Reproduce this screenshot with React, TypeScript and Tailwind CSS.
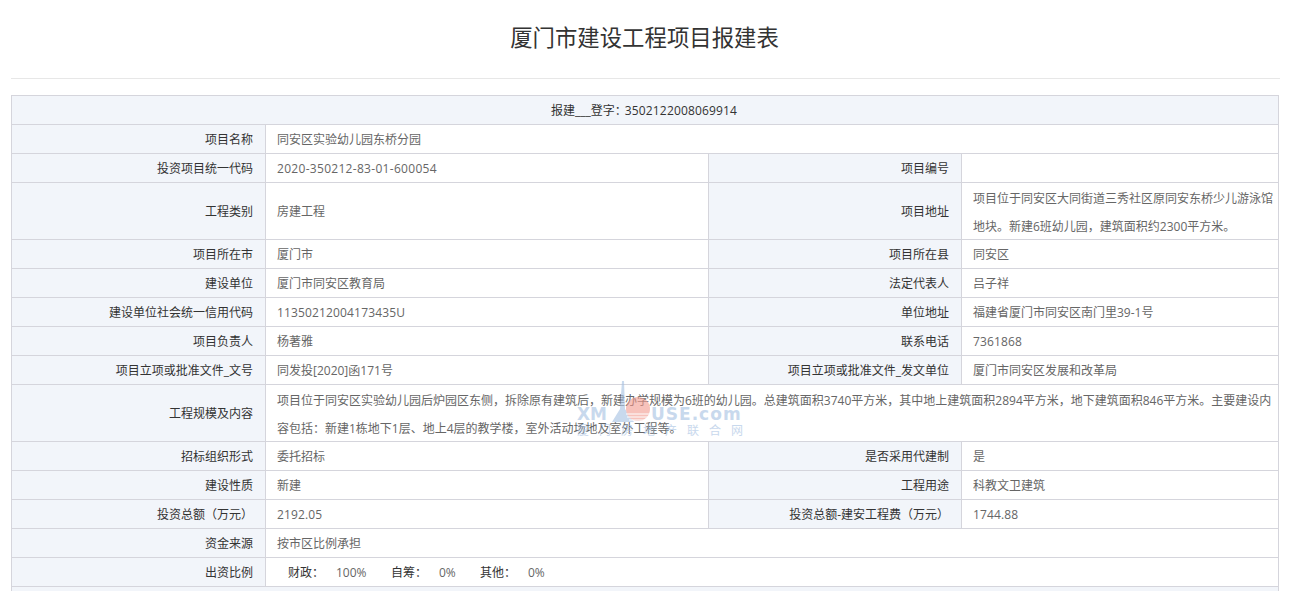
const L = "bg-[#f2f5fa] text-right text-[#333] border border-[#d5d5dc] pl-3 pr-3 pt-[2px] font-normal";
const V = "bg-white text-left text-[#666] border border-[#d5d5dc] pl-[11px] pr-[4px] pt-[2px] font-normal";
const V2 = "bg-white text-left text-[#666] border border-[#d5d5dc] pl-[11px] pr-[4px] leading-[28px] font-normal";
const N = "tracking-[0.15px]";

function Row({ a, b, c, d }: { a: string; b: React.ReactNode; c: string; d: React.ReactNode }) {
  return (
    <tr className="h-[29px]">
      <th className={L}>{a}</th>
      <td className={V}>{b}</td>
      <th className={L}>{c}</th>
      <td className={V}>{d}</td>
    </tr>
  );
}

function Wide({ a, children }: { a: string; children: React.ReactNode }) {
  return (
    <tr className="h-[29px]">
      <th className={L}>{a}</th>
      <td className={V} colSpan={3}>{children}</td>
    </tr>
  );
}

export default function App() {
  return (
    <div className="h-[591px] overflow-hidden bg-white text-xs font-['Open_Sans','Noto_Sans_CJK_SC',sans-serif]">
      <div className="ml-[11px] mr-[12px] pr-[2px] h-[79px] border-b border-[#e7e7e7] flex items-center justify-center pb-[2px]">
        <h1 className="text-[22.4px] text-[#333] font-normal">厦门市建设工程项目报建表</h1>
      </div>
      <div className="relative ml-[11px] mt-4">
        <table className="w-[1267px] table-fixed border-collapse">
          <colgroup>
            <col className="w-[254px]" />
            <col className="w-[443px]" />
            <col className="w-[253px]" />
            <col className="w-[317px]" />
          </colgroup>
          <tbody>
            <tr className="h-[29px]">
              <th colSpan={4} className="bg-[#f2f5fa] text-center text-[#333] border border-[#d5d5dc] pt-[2px] font-normal">报建___登字：<span className={`${N} -ml-[2px] mr-[2px]`}>3502122008069914</span></th>
            </tr>
            <Wide a="项目名称">同安区实验幼儿园东桥分园</Wide>
            <Row a="投资项目统一代码" b={<span className="tracking-[0.3px]">2020-350212-83-01-600054</span>} c="项目编号" d="" />
            <tr className="h-[57px]">
              <th className={L}>工程类别</th>
              <td className={V}>房建工程</td>
              <th className={L}>项目地址</th>
              <td className={V2}><div className="mt-[2px] -mb-[2px]">项目位于同安区大同街道三秀社区原同安东桥少儿游泳馆地块。新建6班幼儿园，建筑面积约2300平方米。</div></td>
            </tr>
            <Row a="项目所在市" b="厦门市" c="项目所在县" d="同安区" />
            <Row a="建设单位" b="厦门市同安区教育局" c="法定代表人" d="吕子祥" />
            <Row a="建设单位社会统一信用代码" b={<span className={N}>11350212004173435U</span>} c="单位地址" d="福建省厦门市同安区南门里39-1号" />
            <Row a="项目负责人" b="杨著雅" c="联系电话" d={<span className={N}>7361868</span>} />
            <Row a="项目立项或批准文件_文号" b="同发投[2020]函171号" c="项目立项或批准文件_发文单位" d="厦门市同安区发展和改革局" />
            <tr className="h-[57px]">
              <th className={L}>工程规模及内容</th>
              <td className={V2} colSpan={3}><div className="mt-[2px] -mb-[2px]">项目位于同安区实验幼儿园后炉园区东侧，拆除原有建筑后，新建办学规模为6班的幼儿园。总建筑面积3740平方米，其中地上建筑面积2894平方米，地下建筑面积846平方米。主要建设内容包括：新建1栋地下1层、地上4层的教学楼，室外活动场地及室外工程等。</div></td>
            </tr>
            <Row a="招标组织形式" b="委托招标" c="是否采用代建制" d="是" />
            <Row a="建设性质" b="新建" c="工程用途" d="科教文卫建筑" />
            <Row a="投资总额（万元）" b={<span className={N}>2192.05</span>} c="投资总额-建安工程费（万元）" d={<span className={N}>1744.88</span>} />
            <Wide a="资金来源">按市区比例承担</Wide>
            <Wide a="出资比例">
              <span className="flex pl-[11px]">
                <span className="text-[#333] w-[48px]">财政：</span>
                <span className="w-[55px]">100%</span>
                <span className="text-[#333] w-[48px]">自筹：</span>
                <span className="w-[41px]">0%</span>
                <span className="text-[#333] w-[48px]">其他：</span>
                <span>0%</span>
              </span>
            </Wide>
            <tr className="h-[29px]">
              <td colSpan={4} className="bg-[#f2f5fa] border border-[#d5d5dc]" />
            </tr>
          </tbody>
        </table>
        <div className="absolute left-[566px] top-[310px] w-[180px] pointer-events-none opacity-60">
          <div className="flex items-center h-[18px] text-[#a5c0e2] font-bold text-[17px] leading-[18px] font-['DejaVu_Sans',sans-serif]">
            <span className="w-[32px] shrink-0 whitespace-nowrap">XM</span>
            <svg width="41" height="18" viewBox="0 0 41 18" className="overflow-visible shrink-0">
              <path d="M13-24 L15-24 L16 4 L25 17 L3 17 L11 4 Z" fill="#a5c0e2" />
              <circle cx="29" cy="4" r="12" fill="#f29a8e" />
              <path d="M17 9H41M18 12H40M20 15H38" stroke="#ffffff" strokeWidth="1" />
            </svg>
            <span className="ml-[1px] whitespace-nowrap tracking-[1px]">USE.com</span>
          </div>
          <div className="flex gap-[10px] text-[#a5c0e2] text-[12px] leading-[14px] font-['Noto_Sans_CJK_SC',sans-serif]">
            {["厦", "门", "房", "地", "产", "联", "合", "网"].map((c) => (
              <span key={c}>{c}</span>
            ))}
          </div>
        </div>
      </div>
    </div>
  );
}
